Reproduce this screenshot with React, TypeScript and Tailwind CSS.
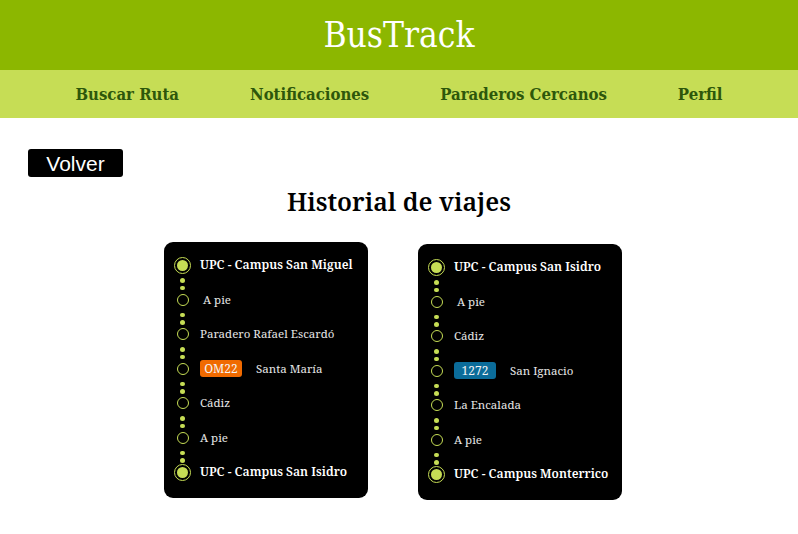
const card = "font-['Noto_Serif',serif]";
const cond = "font-['DejaVu_Serif_Condensed',serif]";

type Stop = { kind: 'end' | 'stop'; label: string; badge?: { text: string; color: string } };

const tripA: Stop[] = [
  { kind: 'end', label: 'UPC - Campus San Miguel' },
  { kind: 'stop', label: 'A pie' },
  { kind: 'stop', label: 'Paradero Rafael Escardó' },
  { kind: 'stop', label: 'Santa María', badge: { text: 'OM22', color: 'bg-[#f06a00]' } },
  { kind: 'stop', label: 'Cádiz' },
  { kind: 'stop', label: 'A pie' },
  { kind: 'end', label: 'UPC - Campus San Isidro' },
];

const tripB: Stop[] = [
  { kind: 'end', label: 'UPC - Campus San Isidro' },
  { kind: 'stop', label: 'A pie' },
  { kind: 'stop', label: 'Cádiz' },
  { kind: 'stop', label: 'San Ignacio', badge: { text: '1272', color: 'bg-[#0b6c9a]' } },
  { kind: 'stop', label: 'La Encalada' },
  { kind: 'stop', label: 'A pie' },
  { kind: 'end', label: 'UPC - Campus Monterrico' },
];

function Marker({ kind }: { kind: Stop['kind'] }) {
  if (kind === 'end') {
    return (
      <div className="w-[17px] h-[17px] rounded-full border-[1.5px] border-[#c6dd55] flex items-center justify-center">
        <div className="w-[11px] h-[11px] rounded-full bg-[#c6dd55]" />
      </div>
    );
  }
  return <div className="w-[12px] h-[12px] rounded-full border-[1.5px] border-[#c6dd55]" />;
}

function Dots() {
  return (
    <div className="w-[17px] flex flex-col items-center gap-[3px] pt-[6px] pb-[2.5px]">
      <div className="w-[4.5px] h-[4.5px] rounded-full bg-[#c6dd55]" />
      <div className="w-[4.5px] h-[4.5px] rounded-full bg-[#c6dd55]" />
    </div>
  );
}

function TripCard({ stops, className }: { stops: Stop[]; className?: string }) {
  return (
    <div className={`w-[204px] h-[256px] bg-black rounded-[9px] pl-[10px] pt-[16px] ${card} ${className ?? ''}`}>
      {stops.map((s, i) => (
        <div key={i}>
          {i > 0 && <Dots />}
          <div className="flex items-center h-[14px]">
            <div className="w-[17px] flex justify-center">
              <Marker kind={s.kind} />
            </div>
            {s.badge ? (
              <div className="flex items-center ml-[9px]">
                <span className={`${s.badge.color} text-[#f4f4f4] text-[12px] leading-none rounded-[3px] w-[42px] h-[17px] flex items-center justify-center`}>
                  {s.badge.text}
                </span>
                <span className="ml-[14px] text-[11.5px] text-[#e6e6e6]">{s.label}</span>
              </div>
            ) : (
              <span
                className={
                  s.kind === 'end'
                    ? 'ml-[9px] text-[12.2px] font-semibold text-white whitespace-nowrap'
                    : `text-[11.5px] text-[#e6e6e6] whitespace-nowrap ${s.label === 'A pie' && i === 1 ? 'ml-[12px]' : 'ml-[9px]'}`
                }
              >
                {s.label}
              </span>
            )}
          </div>
        </div>
      ))}
    </div>
  );
}

export default function App() {
  return (
    <div className="w-[798px] h-[534px] bg-white overflow-hidden">
      <header className="h-[70px] bg-[#8cb700] flex items-center justify-center">
        <h1 className={`${cond} text-white text-[35px] leading-none`}>BusTrack</h1>
      </header>
      <nav className={`h-[48px] bg-[#c6dd55] flex items-center justify-center gap-[71px] ${cond} font-bold text-[16.6px] text-[#2d570b]`}>
        <span>Buscar Ruta</span>
        <span>Notificaciones</span>
        <span>Paraderos Cercanos</span>
        <span>Perfil</span>
      </nav>
      <div className="pl-[28px] pt-[31px]">
        <button className="w-[95px] h-[28px] bg-black text-white rounded-[3px] text-[21px] leading-none font-['Liberation_Sans',sans-serif]">
          Volver
        </button>
      </div>
      <h2 className={`${card} font-semibold text-center text-[25px] leading-none text-black mt-[12px]`}>Historial de viajes</h2>
      <div className="flex justify-center gap-[50px] mt-[28px] pr-[12px]">
        <TripCard stops={tripA} />
        <TripCard stops={tripB} className="mt-[2px]" />
      </div>
    </div>
  );
}
